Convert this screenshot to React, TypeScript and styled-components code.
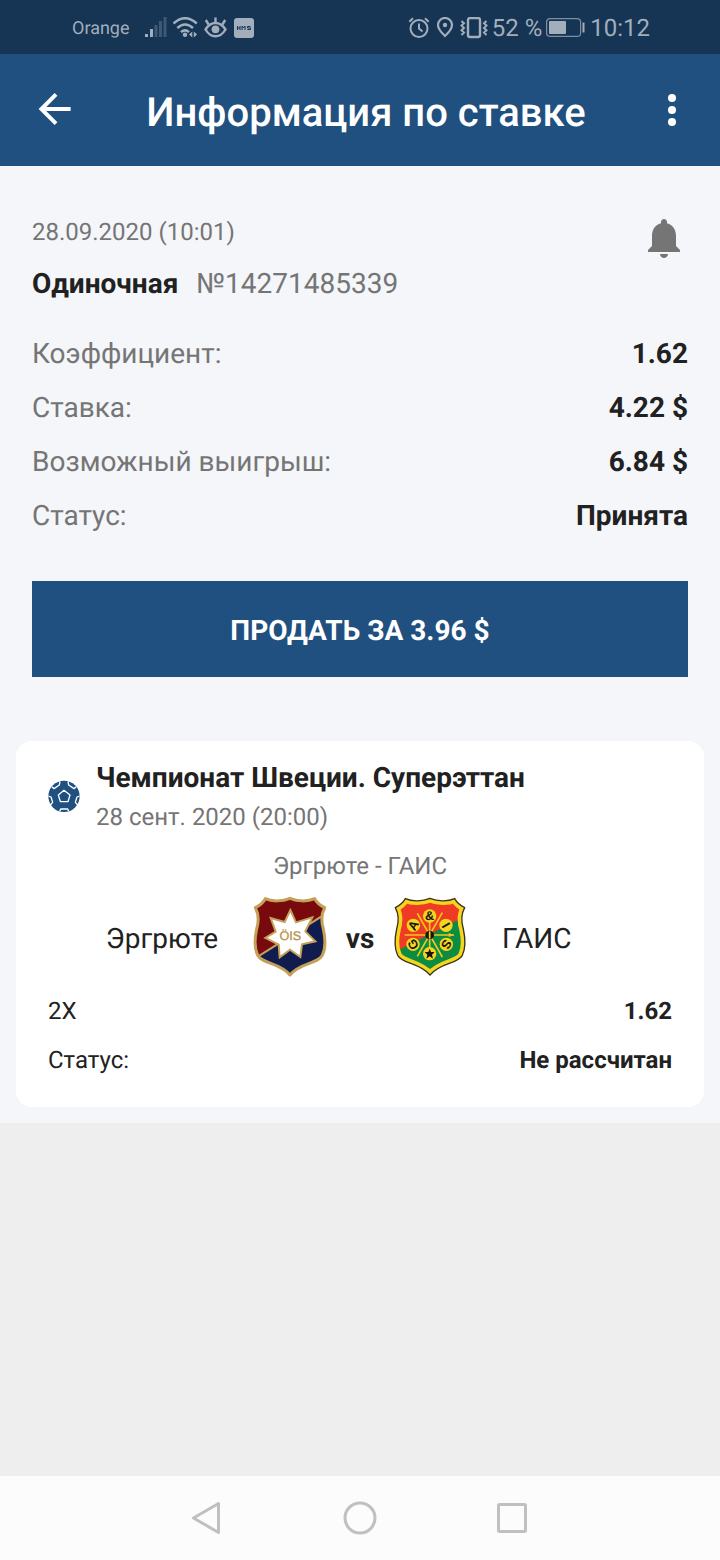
import React from 'react';
import styled, { createGlobalStyle } from 'styled-components';

const GlobalStyle = createGlobalStyle`
  * { box-sizing: border-box; }
  body {
    margin: 0;
    background: #eeeeee;
    font-family: Roboto, "Noto Sans", sans-serif;
    color: #212121;
    text-rendering: geometricPrecision;
  }
  h1, h2, p, dl, dd, dt { margin: 0; font-weight: 400; }
  svg { display: block; flex: none; }
`;

const Screen = styled.div`
  display: flex;
  flex-direction: column;
  min-height: 100vh;
`;

const StatusBar = styled.div`
  display: flex;
  align-items: center;
  justify-content: space-between;
  height: 54px;
  padding: 2px 70px 0 72px;
  background: #163453;
  color: #a2aebb;
`;

const StatusGroup = styled.div<{ $gap: number }>`
  display: flex;
  align-items: center;
  gap: ${(p) => p.$gap}px;
`;

const Carrier = styled.span`
  margin-right: 9px;
  font-size: 18px;
`;

const StatusText = styled.span`
  font-size: 24px;
  line-height: 28px;
  white-space: nowrap;
`;

const Header = styled.header`
  display: flex;
  align-items: center;
  height: 112px;
  background: #20507f;
  color: #ffffff;
`;

const IconButton = styled.button<{ $width: number }>`
  display: flex;
  align-items: center;
  justify-content: center;
  flex: none;
  width: ${(p) => p.$width}px;
  height: 48px;
  padding: 0;
  border: 0;
  background: none;
  color: inherit;
`;

const Title = styled.h1`
  flex: 1;
  padding-top: 6px;
  font-size: 40px;
  line-height: 48px;
  font-weight: 500;
  text-align: center;
  white-space: nowrap;
`;

const Content = styled.main`
  padding: 48px 16px 16px;
  background: #f4f6fa;
`;

const Summary = styled.section`
  padding: 0 16px;
`;

const SummaryHead = styled.div`
  display: flex;
  justify-content: space-between;
  align-items: flex-start;
`;

const DateText = styled.p`
  font-size: 24px;
  line-height: 36px;
  color: #757575;
`;

const BetType = styled.p`
  margin-top: 16px;
  font-size: 28px;
  line-height: 36px;
  color: #757575;
`;

const Strong = styled.strong`
  margin-right: 18px;
  font-weight: 700;
  color: #212121;
`;

const Facts = styled.dl`
  margin-top: 25px;
`;

const Fact = styled.div`
  display: flex;
  justify-content: space-between;
  font-size: 28px;
  line-height: 54px;
`;

const FactLabel = styled.dt`
  color: #757575;
`;

const FactValue = styled.dd`
  font-weight: 700;
`;

const SellButton = styled.button`
  display: block;
  width: 100%;
  height: 96px;
  margin-top: 38px;
  padding: 4px 0 0;
  border: 0;
  background: #20507f;
  color: #ffffff;
  font: 700 28px/36px Roboto, "Noto Sans", sans-serif;
  text-rendering: inherit;
`;

const Card = styled.section`
  margin-top: 64px;
  padding: 16px 32px 22px;
  border-radius: 16px;
  background: #ffffff;
`;

const CardHead = styled.div`
  display: flex;
  align-items: center;
  gap: 16px;
`;

const League = styled.h2`
  font-size: 28px;
  line-height: 42px;
  font-weight: 700;
`;

const MatchName = styled.p`
  margin-top: 13px;
  font-size: 24px;
  line-height: 36px;
  color: #757575;
  text-align: center;
`;

const Teams = styled.div`
  display: grid;
  grid-template-columns: 1fr auto 64px auto 1fr;
  align-items: center;
  margin-top: 12px;
  font-size: 28px;
  line-height: 36px;
`;

const Team = styled.span<{ $side: 'home' | 'away' }>`
  padding: 4px 34px 0;
  text-align: ${(p) => (p.$side === 'home' ? 'right' : 'left')};
`;

const Versus = styled.span`
  padding-top: 4px;
  font-weight: 700;
  text-align: center;
`;

const Outcome = styled.dl`
  margin-top: 10px;
`;

const OutcomeRow = styled.div`
  display: flex;
  justify-content: space-between;
  font-size: 24px;
  line-height: 49px;
`;

const Spacer = styled.div`
  flex: 1;
`;

const NavBar = styled.nav`
  display: flex;
  align-items: center;
  justify-content: center;
  gap: 104px;
  height: 84px;
  background: #fcfcfc;
  color: #c0c0c0;
`;

const SignalIcon = () => (
  <svg width="22" height="22" viewBox="0 0 22 22" fill="currentColor" aria-hidden="true">
    <rect x="0" y="17" width="3" height="3" />
    <rect x="5" y="12" width="3" height="8" />
    <g opacity="0.3">
      <rect x="9.500" y="8" width="3" height="12" />
      <rect x="14" y="4" width="3" height="16" />
      <rect x="18.500" y="0" width="3" height="20" />
    </g>
  </svg>
);

const WifiIcon = () => (
  <svg width="25" height="22" viewBox="0 0 25 22" fill="none" stroke="currentColor" strokeWidth="2.5" aria-hidden="true">
    <path d="M0.500 6.500Q12 -4 23.800 6.500M4.300 11Q12 4 20 11M8 15.200Q12 11.500 16 15.200" />
    <circle cx="12" cy="17.800" r="2.200" fill="currentColor" stroke="none" />
    <path d="M19.300 14.500v6l-3.300-3zM20.800 14.500v6l3.300-3z" fill="currentColor" stroke="none" />
  </svg>
);

const EyeIcon = () => (
  <svg width="24" height="22" viewBox="0 0 24 22" fill="none" stroke="currentColor" strokeWidth="2.400" aria-hidden="true">
    <path d="M1.500 12.500C4.500 7.800 7.500 6 11.500 6S18.500 7.800 21.500 12.500C18.500 17.500 15.500 19.300 11.500 19.300S4.500 17.500 1.500 12.500z" />
    <circle cx="11.500" cy="12.300" r="3.900" fill="currentColor" stroke="none" />
    <path d="M11.500 0.500v5M1.800 3l2.800 4.500M21.200 3l-2.800 4.500" />
  </svg>
);

const HmsIcon = () => (
  <svg width="20" height="20" viewBox="0 0 20 20" aria-hidden="true">
    <rect width="20" height="20" rx="3" fill="#a2aebb" />
    <path d="M3.500 8v4M6 8v4M3.500 10H6M8 12V8l1.500 2L11 8v4M16.500 8.500h-3V10h3v1.500h-3" fill="none" stroke="#163453" strokeWidth="1" />
  </svg>
);

const AlarmIcon = () => (
  <svg width="22" height="22" viewBox="0 0 22 22" fill="none" stroke="currentColor" strokeWidth="2" aria-hidden="true">
    <circle cx="11" cy="11.500" r="8.500" />
    <path d="M11 6.500v5l3.500 3M1.300 4.800L5 1.300M20.700 4.800L17 1.300" />
  </svg>
);

const PinIcon = () => (
  <svg width="20" height="22" viewBox="-2 0 20 22" fill="none" stroke="currentColor" strokeWidth="2.200" aria-hidden="true">
    <path d="M9 19C4.500 14.800 2 11.800 2 8a7 7 0 0 1 14 0c0 3.800-2.500 6.800-7 11z" />
    <circle cx="9" cy="8" r="2.200" fill="currentColor" stroke="none" />
  </svg>
);

const VibrateIcon = () => (
  <svg width="30" height="22" viewBox="-2 0 30 22" fill="none" stroke="currentColor" strokeWidth="2.400" aria-hidden="true">
    <rect x="8" y="1" width="12" height="19" rx="2" />
    <path d="M1.500 4l2.500 2.300-2.500 2.300L4 11l-2.500 2.300L4 15.600 1.500 18M26.500 4L24 6.300l2.500 2.300L24 11l2.500 2.300L24 15.600l2.500 2.400" strokeWidth="2" />
  </svg>
);

const BatteryIcon = () => (
  <svg width="40" height="20" viewBox="0 0 40 20" fill="none" stroke="currentColor" aria-hidden="true">
    <rect x="0.600" y="0.600" width="34" height="17.800" rx="3.500" strokeWidth="1.200" opacity="0.75" />
    <rect x="3" y="3" width="17" height="13" rx="1" fill="currentColor" stroke="none" />
    <path d="M37.500 4.500v10" strokeWidth="2" />
  </svg>
);

const BackIcon = () => (
  <svg width="48" height="48" viewBox="0 0 24 24" fill="currentColor" aria-hidden="true">
    <path d="M20.300 10.500H8.130l5.590-5.590L12.300 3.500l-8 8 8 8 1.410-1.410L8.130 12.500H20.300v-2z" />
  </svg>
);

const MoreIcon = () => (
  <svg width="48" height="48" viewBox="0 0 24 24" fill="currentColor" aria-hidden="true">
    <circle cx="12" cy="6" r="2" />
    <circle cx="12" cy="12" r="2" />
    <circle cx="12" cy="18" r="2" />
  </svg>
);

const BellIcon = () => (
  <svg width="48" height="48" viewBox="0 0 24 24" fill="#757575" aria-hidden="true">
    <path d="M12 22c1.100 0 2-.9 2-2h-4c0 1.100.89 2 2 2zm6-6v-5c0-3.070-1.640-5.640-4.500-6.320V4c0-.83-.67-1.500-1.500-1.500s-1.500.67-1.500 1.500v.68C7.630 5.360 6 7.920 6 11v5l-2 2v1h16v-1l-2-2z" />
  </svg>
);

const BallIcon = () => (
  <svg width="32" height="32" viewBox="0 0 96 96" aria-hidden="true">
    <circle cx="48" cy="49" r="47" fill="#20507f" />
    <g fill="none" stroke="#ffffff" strokeWidth="4" strokeLinejoin="round">
      <path d="M48 31L66 45 60 65H37L31 45z" />
      <path d="M12 20L18 26 34 15 36 4M84 20L78 26 62 15 60 4" />
      <path d="M1 48L9 51 14 67 7 75M95 48L87 51 82 67 89 75" />
      <path d="M35 94L38 87H59L62 94" />
    </g>
  </svg>
);

const SHIELD = 'M150 40C128 49 98 51 76 41C69 54 60 61 46 68C57 88 57 108 50 132C45 155 43 190 53 211C68 238 118 232 150 270C182 232 232 238 247 211C257 190 255 155 250 132C243 108 243 88 254 68C240 61 231 54 224 41C202 51 172 49 150 40Z';

const OisCrest = () => (
  <svg width="76" height="81" viewBox="36 33 228 243" role="img" aria-label="Эргрюте">
    <defs>
      <clipPath id="ois-shield"><path d={SHIELD} /></clipPath>
    </defs>
    <g clipPath="url(#ois-shield)">
      <rect x="36" y="33" width="228" height="243" fill="#78090c" />
      <path d="M50 217L264 82V276H50z" fill="#101c4d" />
      <path d="M50 217L264 82" stroke="#c5a058" strokeWidth="6" />
    </g>
    <path d={SHIELD} fill="none" stroke="#c5a058" strokeWidth="9" strokeLinejoin="round" />
    <path d="M151 75L168 112 217 97 196 139 226 169 186 178 181 216 150 194 119 217 116 179 76 159 107 140 92 99 134 111z" fill="#ffffff" stroke="#c5a058" strokeWidth="6" />
    <text x="151" y="164" textAnchor="middle" fontFamily="Liberation Sans, Arial, sans-serif" fontSize="38" fill="#b9924a" stroke="#b9924a" strokeWidth="1">ÖIS</text>
  </svg>
);

const GAIS_BADGES = [
  { x: 149, y: 93, angle: 0, label: '&' },
  { x: 100, y: 121, angle: -60, label: 'A' },
  { x: 99, y: 178, angle: -120, label: 'G' },
  { x: 198, y: 121, angle: 60, label: 'I' },
  { x: 199, y: 178, angle: 120, label: 'S' },
  { x: 149, y: 206, angle: 0, label: '★' },
];

const GaisCrest = () => (
  <svg width="76" height="81" viewBox="36 33 228 243" role="img" aria-label="ГАИС">
    <defs>
      <clipPath id="gais-shield"><path d={SHIELD} /></clipPath>
    </defs>
    <g clipPath="url(#gais-shield)">
      <rect x="36" y="33" width="228" height="243" fill="#ef3b24" />
      <path d="M50 198L264 90V276H50z" fill="#0c8b43" />
      <path d={SHIELD} fill="none" stroke="#f6d51f" strokeWidth="25" />
    </g>
    <path d={SHIELD} fill="none" stroke="#3c3317" strokeWidth="4" />
    <g stroke="#f0c820" strokeWidth="5">
      <path d="M74 150H222M112 85L187 216M187 83L112 214M149 100V200" />
    </g>
    <path d="M222 150l-16-6v12z" fill="#f0c820" />
    {GAIS_BADGES.map((b) => (
      <g key={b.label}>
        <circle cx={b.x} cy={b.y} r="20" fill="#f6d51f" />
        <g transform={`rotate(${b.angle} ${b.x} ${b.y})`}>
          {b.label === '★' ? (
            <path d="M149 191l4 10h11l-8 8 3 12-10-7-10 7 3-12-8-8h11z" fill="#17150b" />
          ) : (
            <text x={b.x} y={b.y + 13} textAnchor="middle" fontFamily="Liberation Sans, Arial, sans-serif" fontWeight="700" fontSize="38" fill="#17150b">{b.label}</text>
          )}
        </g>
      </g>
    ))}
    <circle cx="149" cy="150" r="13" fill="#17150b" />
    <path d="M149 139v22" stroke="#f6d51f" strokeWidth="5" />
  </svg>
);

const NavBackIcon = () => (
  <svg width="48" height="48" viewBox="0 0 48 48" fill="none" stroke="currentColor" strokeWidth="3" strokeLinejoin="round" aria-hidden="true">
    <path d="M34.500 9.500V38.500L9.500 24z" />
  </svg>
);

const NavHomeIcon = () => (
  <svg width="48" height="48" viewBox="0 0 48 48" fill="none" stroke="currentColor" strokeWidth="3" aria-hidden="true">
    <circle cx="24" cy="24" r="15" />
  </svg>
);

const NavRecentIcon = () => (
  <svg width="48" height="48" viewBox="0 0 48 48" fill="none" stroke="currentColor" strokeWidth="3" aria-hidden="true">
    <rect x="10.500" y="10.500" width="27" height="27" rx="1" />
  </svg>
);

const facts = [
  ['Коэффициент:', '1.62'],
  ['Ставка:', '4.22 $'],
  ['Возможный выигрыш:', '6.84 $'],
  ['Статус:', 'Принята'],
];

const outcomes = [
  ['2X', '1.62'],
  ['Статус:', 'Не рассчитан'],
];

export default function App() {
  return (
    <Screen>
      <GlobalStyle />
      <StatusBar>
        <StatusGroup $gap={6}>
          <Carrier>Orange</Carrier>
          <SignalIcon />
          <WifiIcon />
          <EyeIcon />
          <HmsIcon />
        </StatusGroup>
        <StatusGroup $gap={4}>
          <AlarmIcon />
          <PinIcon />
          <VibrateIcon />
          <StatusText>52 %</StatusText>
          <BatteryIcon />
          <StatusText>10:12</StatusText>
        </StatusGroup>
      </StatusBar>
      <Header>
        <IconButton $width={108} aria-label="Назад"><BackIcon /></IconButton>
        <Title>Информация по ставке</Title>
        <IconButton $width={96} aria-label="Меню"><MoreIcon /></IconButton>
      </Header>
      <Content>
        <Summary>
          <SummaryHead>
            <div>
              <DateText>28.09.2020 (10:01)</DateText>
              <BetType><Strong>Одиночная</Strong>№14271485339</BetType>
            </div>
            <IconButton $width={48} aria-label="Уведомления"><BellIcon /></IconButton>
          </SummaryHead>
          <Facts>
            {facts.map(([label, value]) => (
              <Fact key={label}>
                <FactLabel>{label}</FactLabel>
                <FactValue>{value}</FactValue>
              </Fact>
            ))}
          </Facts>
          <SellButton>ПРОДАТЬ ЗА 3.96 $</SellButton>
        </Summary>
        <Card>
          <CardHead>
            <BallIcon />
            <div>
              <League>Чемпионат Швеции. Суперэттан</League>
              <DateText>28 сент. 2020 (20:00)</DateText>
            </div>
          </CardHead>
          <MatchName>Эргрюте - ГАИС</MatchName>
          <Teams>
            <Team $side="home">Эргрюте</Team>
            <OisCrest />
            <Versus>vs</Versus>
            <GaisCrest />
            <Team $side="away">ГАИС</Team>
          </Teams>
          <Outcome>
            {outcomes.map(([label, value]) => (
              <OutcomeRow key={label}>
                <dt>{label}</dt>
                <FactValue>{value}</FactValue>
              </OutcomeRow>
            ))}
          </Outcome>
        </Card>
      </Content>
      <Spacer />
      <NavBar>
        <IconButton $width={48} aria-label="Назад"><NavBackIcon /></IconButton>
        <IconButton $width={48} aria-label="Домой"><NavHomeIcon /></IconButton>
        <IconButton $width={48} aria-label="Недавние"><NavRecentIcon /></IconButton>
      </NavBar>
    </Screen>
  );
}
